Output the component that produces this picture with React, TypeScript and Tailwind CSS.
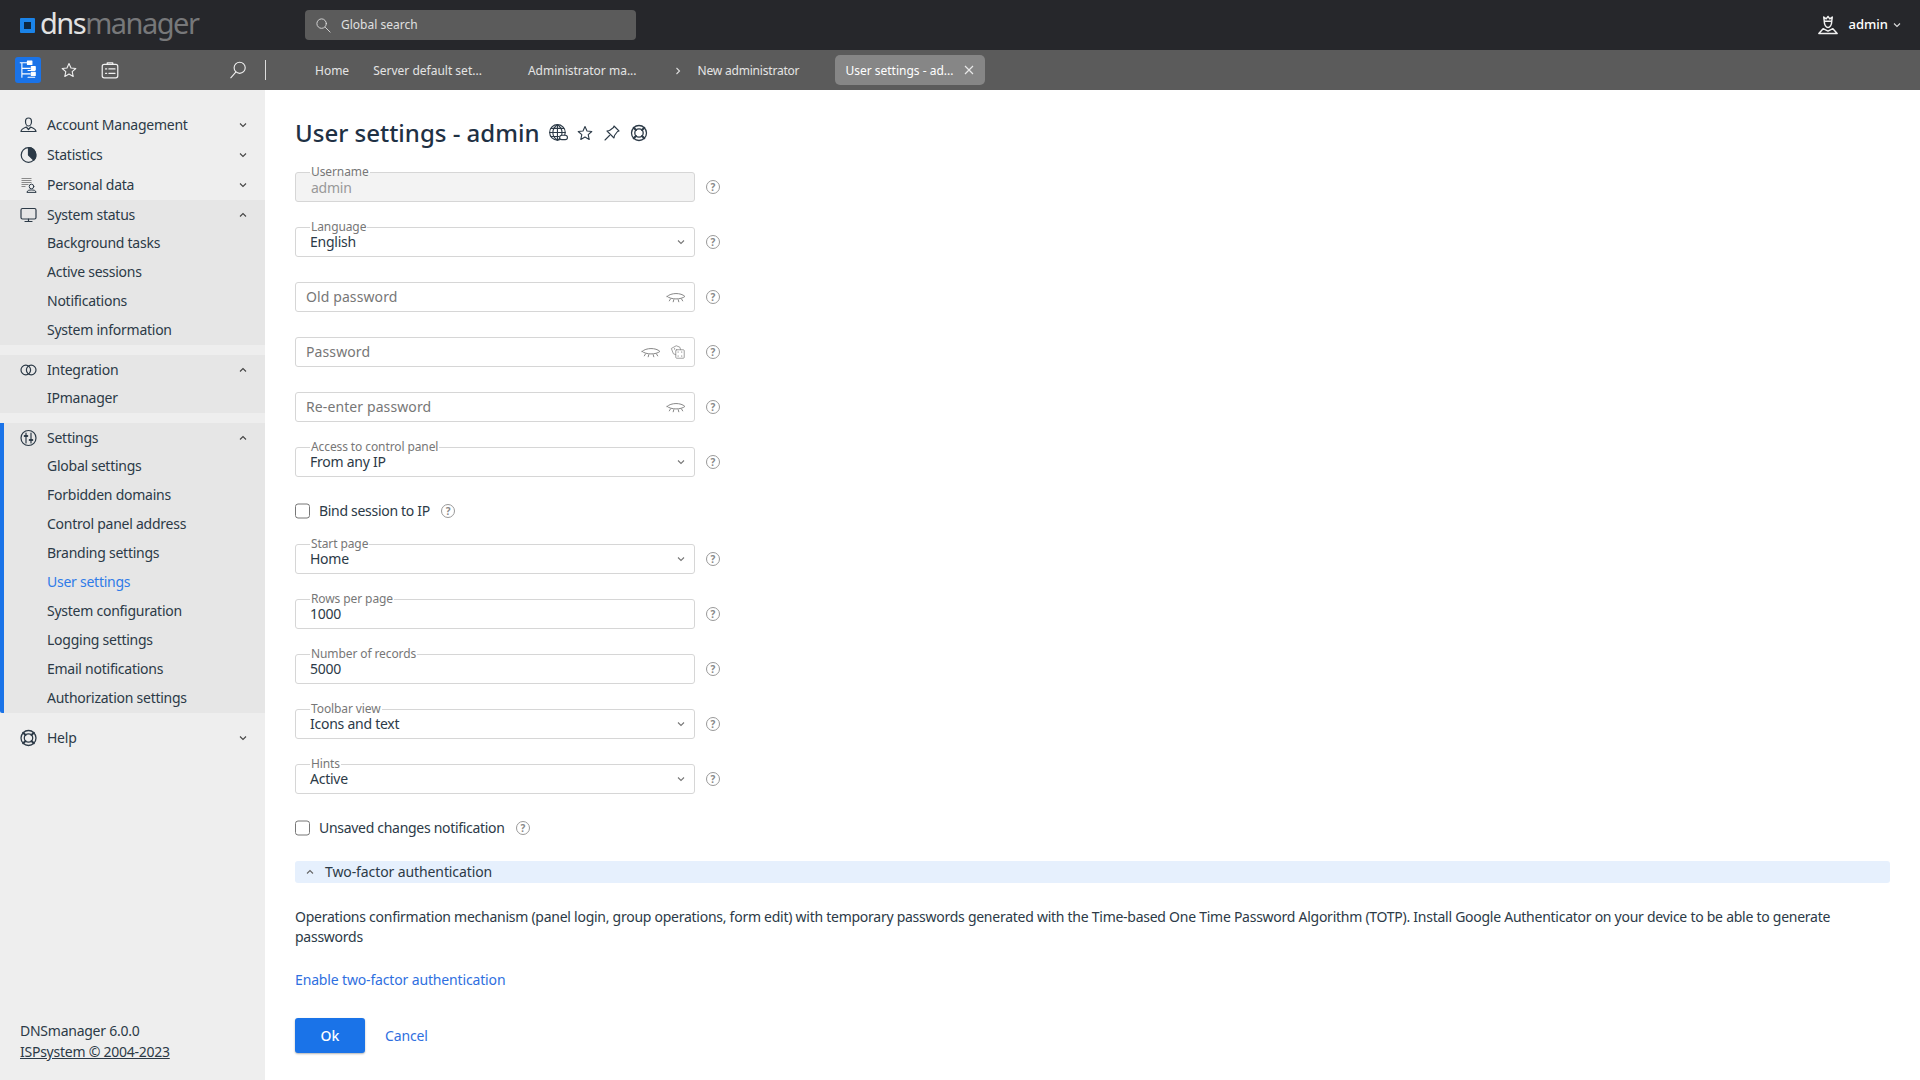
import React from "react";

const S = ({ size = 18, color = "currentColor", sw = 1.2, children, className = "" }: any) => (
  <svg width={size} height={size} viewBox="0 0 18 18" fill="none" stroke={color} strokeWidth={sw} strokeLinecap="round" strokeLinejoin="round" className={"shrink-0 " + className}>{children}</svg>
);

const Chevron = ({ up = false, right = false, size = 10, color = "#444" }: any) => (
  <svg width={size} height={size} viewBox="0 0 10 10" fill="none" stroke={color} strokeWidth={1.1} className="shrink-0">
    <path d={right ? "M3.5 2 L6.5 5 L3.5 8" : up ? "M2 6.5 L5 3.5 L8 6.5" : "M2 3.5 L5 6.5 L8 3.5"} />
  </svg>
);

const Search = ({ color, size = 18 }: any) => (
  <S size={size} color={color} sw={1}>
    <circle cx="10.5" cy="7" r="5" />
    <path d="M7 11 L2.5 16" />
  </S>
);

const GlobalSearchIcon = () => (
  <S size={17} color="#d8d8d8" sw={1}>
    <circle cx="7" cy="7" r="5" />
    <path d="M11 11 L16 16" />
  </S>
);

const StarI = ({ color = "#2c3a47", size = 18, sw = 1.1 }: any) => (
  <S size={size} color={color} sw={sw}>
    <path d="M9 2.5 L11 7 L15.8 7.5 L12.2 10.7 L13.2 15.5 L9 13 L4.8 15.5 L5.8 10.7 L2.2 7.5 L7 7 Z" />
  </S>
);

const Lifebuoy = ({ size = 18, color = "#2c3a47" }: any) => (
  <S size={size} color={color} sw={1.3}>
    <circle cx="9" cy="9" r="7.5" />
    <circle cx="9" cy="9" r="4.2" />
    <path d="M3.7 3.7 L6 6 M14.3 3.7 L12 6 M3.7 14.3 L6 12 M14.3 14.3 L12 12" strokeWidth={2} />
  </S>
);

const Help = () => (
  <span className="flex h-[14px] w-[14px] shrink-0 items-center justify-center rounded-full border border-[#999] text-[10px] font-bold leading-none text-[#888]">?</span>
);

const Eye = () => (
  <S size={20} color="#888" sw={0.9}>
    <path d="M1 8.5 C4.5 5 13.5 5 17 8.5 C13.5 11.5 4.5 11.5 1 8.5 Z" />
    <path d="M4 10.8 L3 12.5 M7 11.4 L6.5 13.3 M11 11.4 L11.5 13.3 M14 10.8 L15 12.5" />
  </S>
);

const Dice = () => (
  <S size={16} color="#888" sw={0.9}>
    <rect x="6.5" y="6.5" width="9.5" height="9.5" rx="1" />
    <path d="M6.5 12 L3.8 11 L1.5 5 L7 2 L11 3.5 L12 6.5" />
    <path d="M9 9 h.3 M13 9 h.3 M9 13.5 h.3 M13 13.5 h.3 M5 5.5 h.3" strokeWidth={1.3} />
  </S>
);

const AccountI = () => (
  <S>
    <path d="M6 5.5 C6 3 7.3 2 9 2 C10.7 2 12 3 12 5.5 C12 8 10.5 10 9 10 C7.5 10 6 8 6 5.5 Z" />
    <path d="M1.5 15.5 C1.8 12.5 4.5 12 6.8 11 L9 13.5 L11.2 11 C13.5 12 16.2 12.5 16.5 15.5 Z" />
  </S>
);
const StatsI = () => (
  <S>
    <circle cx="9" cy="9" r="7.3" />
    <path d="M9 1.7 A7.3 7.3 0 0 1 14.2 14.2 L9 9 Z" fill="currentColor" />
  </S>
);
const PersonalI = () => (
  <S sw={1}>
    <path d="M2 2.5 H12 M2 4.5 H12 M2 6.5 H12 M2 8.5 H9 M2 10.5 H6" stroke="#8a8a8a" strokeWidth={1.2} strokeLinecap="butt" />
    <circle cx="12" cy="10.5" r="2.3" />
    <path d="M7.5 16 C7.8 14 10 14 12 14 C14 14 16.2 14 16.5 16 Z" />
  </S>
);
const MonitorI = () => (
  <S>
    <rect x="1.5" y="2.5" width="15" height="10.5" rx="1.5" />
    <path d="M9 13 V15.5 M5.5 15.5 H12.5" />
  </S>
);
const IntegrationI = () => (
  <S>
    <circle cx="6.3" cy="9" r="4.8" />
    <circle cx="11.7" cy="9" r="4.8" />
  </S>
);
const SettingsI = () => (
  <S>
    <circle cx="9" cy="9" r="7.5" />
    <path d="M6.5 4 V14 M11.5 4 V14" />
    <path d="M5.2 7 H7.8 M10.2 11 H12.8" strokeWidth={2} />
  </S>
);

const Row = ({ icon, label, open = false }: any) => (
  <div className={"flex items-center text-[#2c3a47] " + (open ? "h-[29px]" : "h-[30px]")}>
    <span className="flex w-[27px] -translate-x-[0.5px]">{icon}</span>
    <span className="flex-1 text-sm tracking-[-0.25px]">{label}</span>
    <span className="pr-[17px]"><Chevron up={open} /></span>
  </div>
);

const Sub = ({ label, active = false }: any) => (
  <div className={"flex h-[29px] items-center pb-[1px] pl-[27px] text-sm tracking-[-0.25px] " + (active ? "text-[#2f7be8]" : "text-[#2c3a47]")}>{label}</div>
);

const Group = ({ icon, label, items, active = false, cur }: any) => (
  <div className={"mb-[10px] bg-[#e6e6e6] " + (active ? "rounded-bl-[2px] border-l-4 border-[#1a73e8] pl-[16px]" : "pl-[20px]")}>
    <Row icon={icon} label={label} open />
    {items.map((t: string) => <Sub key={t} label={t} active={t === cur} />)}
  </div>
);

const Sidebar = () => (
  <aside className="flex w-[265px] shrink-0 flex-col justify-between bg-[#eeeeee] pb-[18px] pt-[20px]">
    <div>
      <div className="pl-[20px]">
        <Row icon={<AccountI />} label="Account Management" />
        <Row icon={<StatsI />} label="Statistics" />
        <Row icon={<PersonalI />} label="Personal data" />
      </div>
      <Group icon={<MonitorI />} label="System status" items={["Background tasks", "Active sessions", "Notifications", "System information"]} />
      <Group icon={<IntegrationI />} label="Integration" items={["IPmanager"]} />
      <Group icon={<SettingsI />} label="Settings" active cur="User settings" items={["Global settings", "Forbidden domains", "Control panel address", "Branding settings", "User settings", "System configuration", "Logging settings", "Email notifications", "Authorization settings"]} />
      <div className="pl-[20px]"><Row icon={<Lifebuoy color="currentColor" />} label="Help" /></div>
    </div>
    <div className="pl-[20px] text-sm leading-[21px] tracking-[-0.25px] text-[#2c3a47]">
      <div>DNSmanager 6.0.0</div>
      <div className="underline">ISPsystem © 2004-2023</div>
    </div>
  </aside>
);

const Legend = ({ text, gray = false }: any) => (
  <span className={"absolute -top-[8px] left-[14px] px-[1px] text-xs leading-[13px] tracking-[-0.1px] text-[#777] " + (gray ? "bg-[linear-gradient(#fff_60%,#f3f3f3_60%)]" : "bg-white")}>{text}</span>
);

const Field = ({ legend, value, select = false, disabled = false, placeholder, eye = false, dice = false }: any) => (
  <div className="mb-[25px] flex items-center">
    <div className={"relative flex h-[30px] w-[400px] items-center rounded-[3px] border border-[#d6d6d6] text-sm " + (disabled ? "bg-[#f3f3f3]" : "bg-white")}>
      {legend && <Legend text={legend} gray={disabled} />}
      {placeholder && <span className="pl-[10px] tracking-[0.1px] text-[#777]">{placeholder}</span>}
      {value && <span className={"leading-[14px] tracking-[-0.25px] " + (disabled ? "pl-[15px] pt-[1px] text-[#999]" : "pl-[14px] text-[#2c3a47]")}>{value}</span>}
      <span className="flex-1" />
      {select && <span className="pr-[8px]"><Chevron color="#777" /></span>}
      {eye && <span className={dice ? "mr-[9px]" : "pr-[8px]"}><Eye /></span>}
      {dice && <span className="pr-[8px]"><Dice /></span>}
    </div>
    <span className="ml-[11px]"><Help /></span>
  </div>
);

const Check = ({ label, className = "" }: any) => (
  <div className={"flex h-[16px] items-center text-sm tracking-[-0.3px] text-[#2c3a47] " + className}>
    <span className="h-[15px] w-[15px] -translate-y-[0.5px] rounded-[3px] border border-[#777] bg-white" />
    <span className="ml-[9px]">{label}</span>
    <span className="ml-[11px]"><Help /></span>
  </div>
);

const Tab = ({ children, className = "" }: any) => (
  <span className={"translate-y-[1px] whitespace-nowrap text-xs text-[#e4e4e4] " + className}>{children}</span>
);

export default function App() {
  return (
    <div className="flex h-[1080px] w-[1920px] flex-col overflow-hidden bg-white font-['Noto_Sans','Open_Sans',sans-serif]">
      <header className="flex h-[50px] shrink-0 items-center bg-[#26272b] pl-[20px] pr-[18px]">
        <svg width="15" height="15" viewBox="0 0 15 15" className="shrink-0">
          <rect width="15" height="15" rx="1" fill="#1a83e8" />
          <rect x="4" y="4" width="7" height="7" fill="#0d2740" />
        </svg>
        <span className="ml-[5px] w-[265px] -translate-y-[2px] text-[29px] font-normal leading-[30px] tracking-[-1.5px]">
          <span className="text-[#e2e2e2]">dns</span><span className="text-[#77787a]">manager</span>
        </span>
        <div className="flex h-[30px] w-[331px] items-center rounded-[4px] bg-[#5b5b5b] pl-[10px] text-[#e0e0e0]">
          <GlobalSearchIcon />
          <span className="ml-[9px] text-xs">Global search</span>
        </div>
        <div className="flex-1" />
        <S size={22} color="#f0f0f0" sw={1.2}>
          <path d="M6 6 L5.5 2.5 L7.5 4 L9 2 L10.5 4 L12.5 2.5 L12 6 Z" />
          <path d="M6 6.5 C6 9 7.5 11 9 11 C10.5 11 12 9 12 6.5" />
          <path d="M1.5 16 L5 12 L9 14 L13 12 L16.5 16 Z" />
        </S>
        <span className="ml-[10px] text-[13px] font-medium text-white">admin</span>
        <span className="ml-[4px]"><Chevron color="#ddd" /></span>
      </header>

      <nav className="flex h-[40px] shrink-0 items-center bg-[#5b5b5b] pl-[15px]">
        <span className="flex h-[26px] w-[26px] items-center justify-center rounded-[3px] bg-[#1a73e8]">
          <S size={20} color="#fff" sw={1}>
            <path d="M2 2.5 H8 M3.5 2.5 V15.5 M3.5 7.5 H11 M3.5 12.5 H11 M9 9.5 H15 M9 15.5 H15" />
            <rect x="8.5" y="1" width="4" height="3" fill="#fff" />
            <rect x="12" y="6" width="3.5" height="3" fill="#fff" />
            <rect x="12" y="11" width="3.5" height="3" fill="#fff" />
          </S>
        </span>
        <span className="ml-[19px]"><StarI color="#f0f0f0" /></span>
        <span className="ml-[22px]">
          <S size={20} color="#f0f0f0" sw={1.1}>
            <rect x="2" y="4" width="14" height="12" rx="1.8" />
            <path d="M6.5 4 V2.5 H11.5 V4 M5 8 H6 M8 8 H13.5 M5 12 H6 M8 12 H13.5" />
          </S>
        </span>
        <span className="ml-[108px]"><Search color="#f0f0f0" size={20} /></span>
        <span className="ml-[17px] h-[20px] w-px bg-[#dcdcdc]" />
        <Tab className="ml-[49px]">Home</Tab>
        <Tab className="ml-[24px]">Server default set...</Tab>
        <Tab className="ml-[46px]">Administrator ma...</Tab>
        <span className="ml-[36px] translate-y-[1px]"><Chevron right color="#ddd" size={10} /></span>
        <Tab className="ml-[15px] tracking-[-0.2px]">New administrator</Tab>
        <span className="ml-[36px] flex h-[30px] w-[150px] items-center justify-between rounded-[5px] bg-[#868686] pl-[10px] pr-[11px]">
          <span className="translate-y-[1px] text-xs text-white">User settings - ad...</span>
          <svg width="10" height="10" viewBox="0 0 10 10" stroke="#e8e8e8" strokeWidth="1.2"><path d="M1 1 L9 9 M9 1 L1 9" /></svg>
        </span>
      </nav>

      <div className="flex flex-1">
        <Sidebar />
        <main className="flex-1 pl-[30px] pr-[30px] pt-[26px]">
          <div className="mb-[23px] flex h-[33px] items-center">
            <h1 className="text-2xl font-medium leading-[33px] text-[#1f3144]">User settings - admin</h1>
            <span className="ml-[8px]">
              <S size={20} color="#2c3a47" sw={1}>
                <circle cx="8.5" cy="8.5" r="7" />
                <path d="M1.5 8.5 H15.5 M8.5 1.5 V15.5 M8.5 1.5 C3 5 3 12 8.5 15.5 M8.5 1.5 C14 5 14 12 8.5 15.5 M2.7 4.8 H14.3 M2.7 12.2 H10" />
                <rect x="10.5" y="11" width="7" height="4" rx="2" fill="#fff" />
              </S>
            </span>
            <span className="ml-[8px]"><StarI size={18} /></span>
            <span className="ml-[9px]">
              <S size={18} color="#2c3a47" sw={1.1}>
                <path d="M11 2 L16 7 L14.5 7.5 L11.5 11.5 L11 14 L4 7 L6.5 6.5 L10.5 3.5 Z" />
                <path d="M6.5 11.5 L2 16" />
              </S>
            </span>
            <span className="ml-[9px]"><Lifebuoy /></span>
          </div>

          <Field legend="Username" value="admin" disabled />
          <Field legend="Language" value="English" select />
          <Field placeholder="Old password" eye />
          <Field placeholder="Password" eye dice />
          <Field placeholder="Re-enter password" eye />
          <Field legend="Access to control panel" value="From any IP" select />
          <Check label="Bind session to IP" className="mb-[25px] mt-[26px]" />
          <Field legend="Start page" value="Home" select />
          <Field legend="Rows per page" value="1000" />
          <Field legend="Number of records" value="5000" />
          <Field legend="Toolbar view" value="Icons and text" select />
          <Field legend="Hints" value="Active" select />
          <Check label="Unsaved changes notification" className="mt-[26px]" />

          <div className="mt-[25px] flex h-[22px] items-center rounded-[3px] bg-[#e6f0fd] pl-[10px] text-sm tracking-[-0.1px] text-[#2c3a47]">
            <Chevron up color="#666" />
            <span className="ml-[10px]">Two-factor authentication</span>
          </div>

          <p className="mt-[24px] text-sm leading-[20px] tracking-[-0.26px] text-[#2c3a47]">
            Operations confirmation mechanism (panel login, group operations, form edit) with temporary passwords generated with the Time-based One Time Password Algorithm (TOTP). Install Google Authenticator on your device to be able to generate passwords
          </p>
          <a className="mt-[23px] block text-sm leading-[20px] tracking-[-0.15px] text-[#2f6fe0]">Enable two-factor authentication</a>
          <div className="mt-[28px] flex items-center">
            <button className="h-[35px] w-[70px] rounded-[3px] bg-[#1a73e8] text-sm font-medium text-white shadow-[0_1px_2px_rgba(0,0,0,0.3)]">Ok</button>
            <a className="ml-[20px] text-sm tracking-[-0.15px] text-[#2f6fe0]">Cancel</a>
          </div>
        </main>
      </div>
    </div>
  );
}
